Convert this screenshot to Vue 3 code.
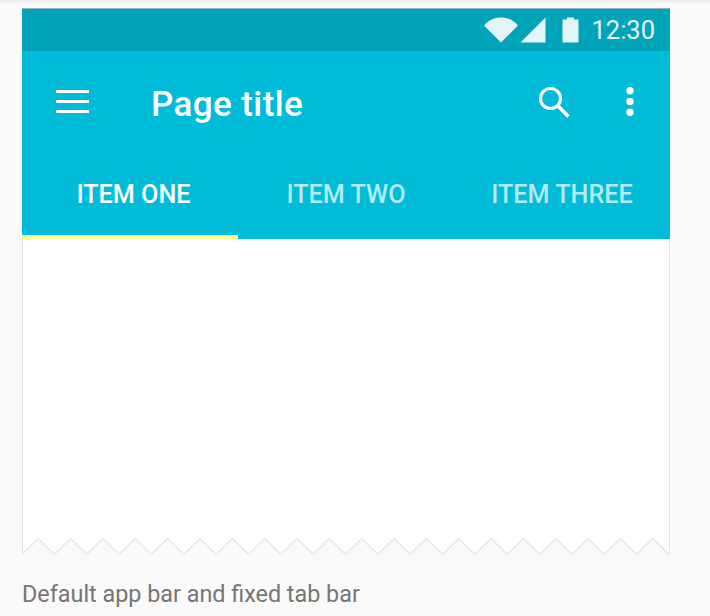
<script setup>
const tabs = [
  { label: 'ITEM ONE', active: true },
  { label: 'ITEM TWO', active: false },
  { label: 'ITEM THREE', active: false },
]

// zigzag tear along the bottom edge of the phone frame
const zigWidth = 648
const zigPeriod = 32.35
const zigTop = 0.5
const zigBottom = 16.5
function buildZig() {
  let pts = []
  let x = 0
  let low = true
  while (x < zigWidth) {
    pts.push(`${x.toFixed(1)},${low ? zigBottom : zigTop}`)
    x += zigPeriod / 2
    low = !low
  }
  pts.push(`${zigWidth},${zigBottom}`)
  return pts.join(' ')
}
const zigLine = buildZig()
const zigFill = `0,0 ${zigWidth},0 ${zigLine.split(' ').reverse().join(' ')}`
</script>

<template>
  <div class="page">
    <div class="top-shade"></div>
    <div class="frame">
      <div class="status-bar">
        <svg class="wifi" width="34" height="26" viewBox="0 0 34 26">
          <path d="M0 8.5C4.5 3 10.500 0.500 17 0.500S29.500 3 34 8.500L17 25.500Z" fill="#e4f5f8" />
        </svg>
        <svg class="signal" width="26" height="26" viewBox="0 0 26 26">
          <path d="M25.500 0.500V25.500H0.500Z" fill="#e4f5f8" />
        </svg>
        <svg class="battery" width="17" height="26" viewBox="0 0 17 26">
          <path d="M5 0.500H12V2.500H16.500V25.500H0.500V2.500H5Z" fill="#e4f5f8" />
        </svg>
        <span class="clock">12:30</span>
      </div>
      <div class="toolbar">
        <svg class="menu" width="33" height="23" viewBox="0 0 33 23">
          <rect x="0" y="0" width="33" height="3" fill="#fff" />
          <rect x="0" y="10" width="33" height="3" fill="#fff" />
          <rect x="0" y="20" width="33" height="3" fill="#fff" />
        </svg>
        <span class="title">Page title</span>
        <svg class="search" width="32" height="32" viewBox="0 0 32 32">
          <circle cx="12.500" cy="12.500" r="10" fill="none" stroke="#fff" stroke-width="3.200" />
          <path d="M20 20L30.500 30.500" fill="none" stroke="#fff" stroke-width="3.600" />
        </svg>
        <svg class="more" width="8" height="29" viewBox="0 0 8 29">
          <circle cx="4" cy="3.700" r="3.700" fill="#fff" />
          <circle cx="4" cy="14.500" r="3.700" fill="#fff" />
          <circle cx="4" cy="25.300" r="3.700" fill="#fff" />
        </svg>
      </div>
      <div class="tabs">
        <div v-for="tab in tabs" :key="tab.label" class="tab" :class="{ active: tab.active }">
          {{ tab.label }}
        </div>
      </div>
      <div class="content"></div>
      <svg class="zig" :width="zigWidth" height="17" :viewBox="`0 0 ${zigWidth} 17`">
        <polygon :points="zigFill" fill="#fff" />
        <polyline :points="zigLine" fill="none" stroke="#ebebeb" stroke-width="1.800" />
        <path :d="`M0.500 0V17M${zigWidth - 0.5} 0V17`" fill="none" stroke="#e4e4e4" />
      </svg>
    </div>
    <p class="caption">Default app bar and fixed tab bar</p>
  </div>
</template>

<style scoped>
.page {
  position: relative;
  width: 710px;
  height: 616px;
  overflow: hidden;
  box-sizing: border-box;
  padding: 8px 0 0 22px;
  background: #fafafa;
  font-family: Roboto, "Liberation Sans", sans-serif;
}

.top-shade {
  position: absolute;
  top: 0;
  left: 0;
  right: 0;
  height: 4px;
  background: linear-gradient(#ececec, #fafafa);
}

.frame {
  position: relative;
  width: 648px;
}

.status-bar {
  display: flex;
  align-items: center;
  box-sizing: border-box;
  height: 43px;
  padding-right: 15px;
  background: #00a4b8;
  border-top: 1px solid #8fb4ba;
}

.wifi {
  margin-left: auto;
  margin-right: 2px;
}

.signal {
  margin-right: 16px;
}

.battery {
  margin-right: 12px;
}

.clock {
  color: #e4f5f8;
  font-size: 25.500px;
  line-height: 30px;
}

.toolbar {
  display: flex;
  align-items: center;
  box-sizing: border-box;
  height: 99px;
  padding: 2px 36px 0 34px;
  background: #00bcd9;
}

.menu {
  margin-right: 62px;
}

.title {
  flex: 1;
  margin-top: 5px;
  color: #fff;
  font-size: 35px;
  font-weight: 500;
  letter-spacing: 0.4px;
}

.search {
  margin-right: 56px;
}

.tabs {
  display: grid;
  grid-template-columns: repeat(3, 216px);
  height: 89px;
  background: #00bcd9;
}

.tab {
  box-sizing: border-box;
  padding-top: 26px;
  text-align: center;
  color: #b2ebf2;
  font-size: 25.200px;
  font-weight: 500;
  line-height: 37px;
}

.tab.active {
  padding-left: 7px;
  color: #fff;
  border-bottom: 4px solid #ffff8d;
}

.content {
  height: 299px;
  background: #fff;
  border-left: 1px solid #e4e4e4;
  border-right: 1px solid #e4e4e4;
  box-sizing: border-box;
}

.zig {
  display: block;
}

.caption {
  margin: 22px 0 0;
  color: #757575;
  font-size: 23.350px;
  line-height: 34px;
}
</style>
